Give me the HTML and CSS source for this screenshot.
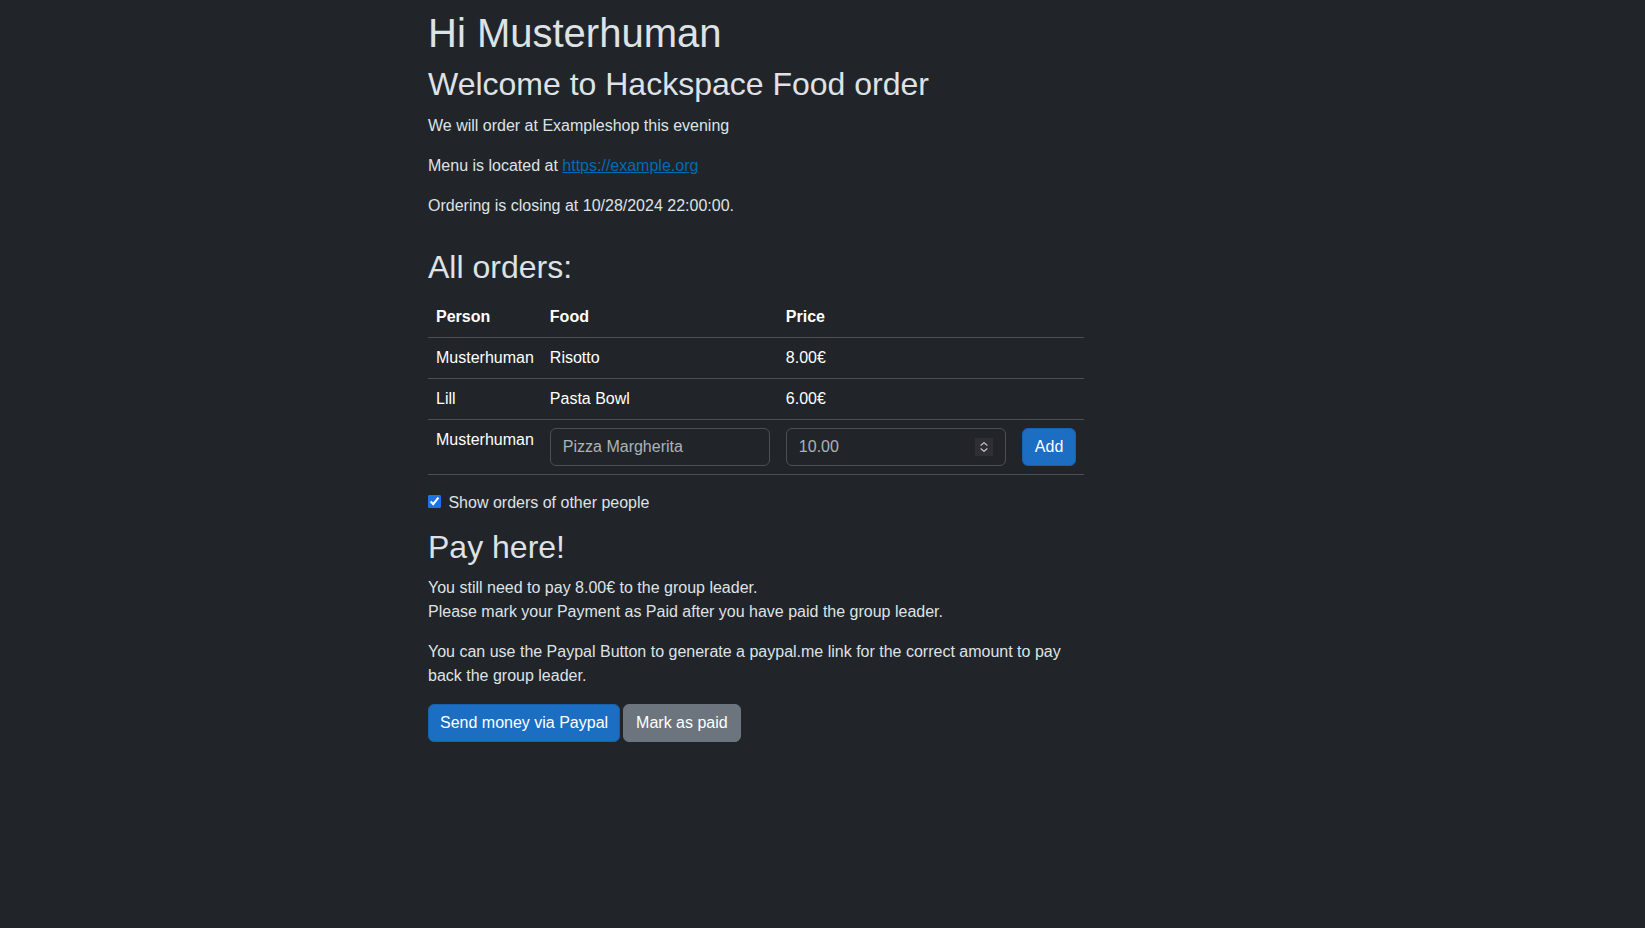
FILE: index.html
```html
<!DOCTYPE html>
<html lang="en">
<head>
<meta charset="utf-8">
<title>Hackspace Food order</title>
<link rel="stylesheet" href="styles.css">
</head>
<body>
<main class="page">
  <h1 class="title">Hi Musterhuman</h1>
  <h2 class="subtitle">Welcome to Hackspace Food order</h2>
  <div class="intro">
    <p>We will order at Exampleshop this evening</p>
    <p>Menu is located at <a href="#" class="link">https://example.org</a></p>
    <p>Ordering is closing at 10/28/2024 22:00:00.</p>
  </div>

  <section class="orders">
    <h2 class="section-title">All orders:</h2>
    <table class="table">
      <thead>
        <tr><th>Person</th><th>Food</th><th>Price</th><th></th></tr>
      </thead>
      <tbody>
        <tr><td>Musterhuman</td><td>Risotto</td><td>8.00€</td><td></td></tr>
        <tr><td>Lill</td><td>Pasta Bowl</td><td>6.00€</td><td></td></tr>
        <tr>
          <td>Musterhuman</td>
          <td><input class="form-control food-input" type="text" placeholder="Pizza Margherita"></td>
          <td>
            <div class="number-field">
              <input class="form-control price-input" type="number" step="0.01" placeholder="10.00">
              <span class="spinner" aria-hidden="true">
                <svg width="18" height="18" viewBox="0 0 18 18">
                  <rect x="0" y="0" width="18" height="18" fill="#2f2e34"/>
                  <path d="M6 7.2 L9 4.6 L12 7.2" fill="none" stroke="#c9c9cc" stroke-width="1.2" stroke-linecap="round" stroke-linejoin="round"/>
                  <path d="M6 10.8 L9 13.4 L12 10.8" fill="none" stroke="#c9c9cc" stroke-width="1.2" stroke-linecap="round" stroke-linejoin="round"/>
                </svg>
              </span>
            </div>
          </td>
          <td><button class="btn btn-primary" type="button">Add</button></td>
        </tr>
      </tbody>
    </table>
    <div class="check-row">
      <label class="check-label"><input class="check" type="checkbox" checked> Show orders of other people</label>
    </div>
  </section>

  <section class="pay">
    <h2 class="section-title">Pay here!</h2>
    <p>You still need to pay 8.00€ to the group leader.<br>Please mark your Payment as Paid after you have paid the group leader.</p>
    <p>You can use the Paypal Button to generate a paypal.me link for the correct amount to pay back the group leader.</p>
    <div class="actions">
      <button class="btn btn-primary btn-paypal" type="button">Send money via Paypal</button>
      <button class="btn btn-secondary" type="button">Mark as paid</button>
    </div>
  </section>
</main>
</body>
</html>
```

FILE: styles.css
```css
html, body {
  margin: 0;
  padding: 0;
}

body {
  background: #212529;
  color: #dee2e6;
  font-family: "Liberation Sans", Arial, sans-serif;
  font-size: 16px;
  line-height: 1.5;
  min-height: 100vh;
}

*, *::before, *::after {
  box-sizing: border-box;
}

.page {
  margin-left: 428px;
  width: 655px;
  padding-top: 9px;
}

.title {
  font-size: 40px;
  font-weight: 400;
  line-height: 1.2;
  margin: 0 0 8px;
}

.subtitle {
  font-size: 32px;
  font-weight: 400;
  line-height: 1.2;
  margin: 0 0 8px;
}

.section-title {
  font-size: 32px;
  font-weight: 400;
  line-height: 1.2;
  margin: 0 0 10px;
}

.intro {
  padding-top: 3px;
}

p {
  margin: 0 0 16px;
}

.link {
  color: #006bb7;
  text-decoration: underline;
}

.orders .section-title {
  margin-top: 30px;
}

.table {
  width: 100%;
  border-collapse: collapse;
  margin-bottom: 16px;
  color: #fff;
}

.table th,
.table td {
  padding: 8px;
  text-align: left;
  vertical-align: top;
  border-bottom: 1px solid #495057;
  white-space: nowrap;
}

.table th {
  font-weight: 700;
}

.form-control {
  display: block;
  padding: 6px 12px;
  font: inherit;
  font-size: 16px;
  line-height: 1.5;
  color: #dee2e6;
  background: #212529;
  border: 1px solid #495057;
  border-radius: 6px;
  outline: none;
}

.form-control::placeholder {
  color: rgba(222, 226, 230, 0.75);
}

.food-input {
  width: 220px;
}

.number-field {
  position: relative;
  width: 220px;
}

.price-input {
  width: 220px;
  padding-right: 36px;
  -moz-appearance: textfield;
}

.price-input::-webkit-inner-spin-button,
.price-input::-webkit-outer-spin-button {
  -webkit-appearance: none;
  margin: 0;
}

.spinner {
  position: absolute;
  right: 13px;
  top: 10px;
  width: 18px;
  height: 18px;
  display: block;
  pointer-events: none;
}

.spinner svg {
  display: block;
}

.btn {
  display: inline-block;
  padding: 6px 12px;
  font-family: inherit;
  font-size: 16px;
  line-height: 1.5;
  color: #fff;
  border: 1px solid transparent;
  border-radius: 6px;
  cursor: pointer;
}

.btn-primary {
  background: #1b6ec2;
  border-color: #1861ac;
}

.btn-paypal {
  padding-left: 11px;
  padding-right: 11px;
}

.btn-secondary {
  background: #6c757d;
  border-color: #6c757d;
}

.check-row {
  margin-bottom: 13px;
}

.check {
  margin: 3px 3px 3px 0;
  vertical-align: baseline;
  accent-color: #1a73e8;
}

.actions {
  display: flex;
  gap: 3px;
}
```
